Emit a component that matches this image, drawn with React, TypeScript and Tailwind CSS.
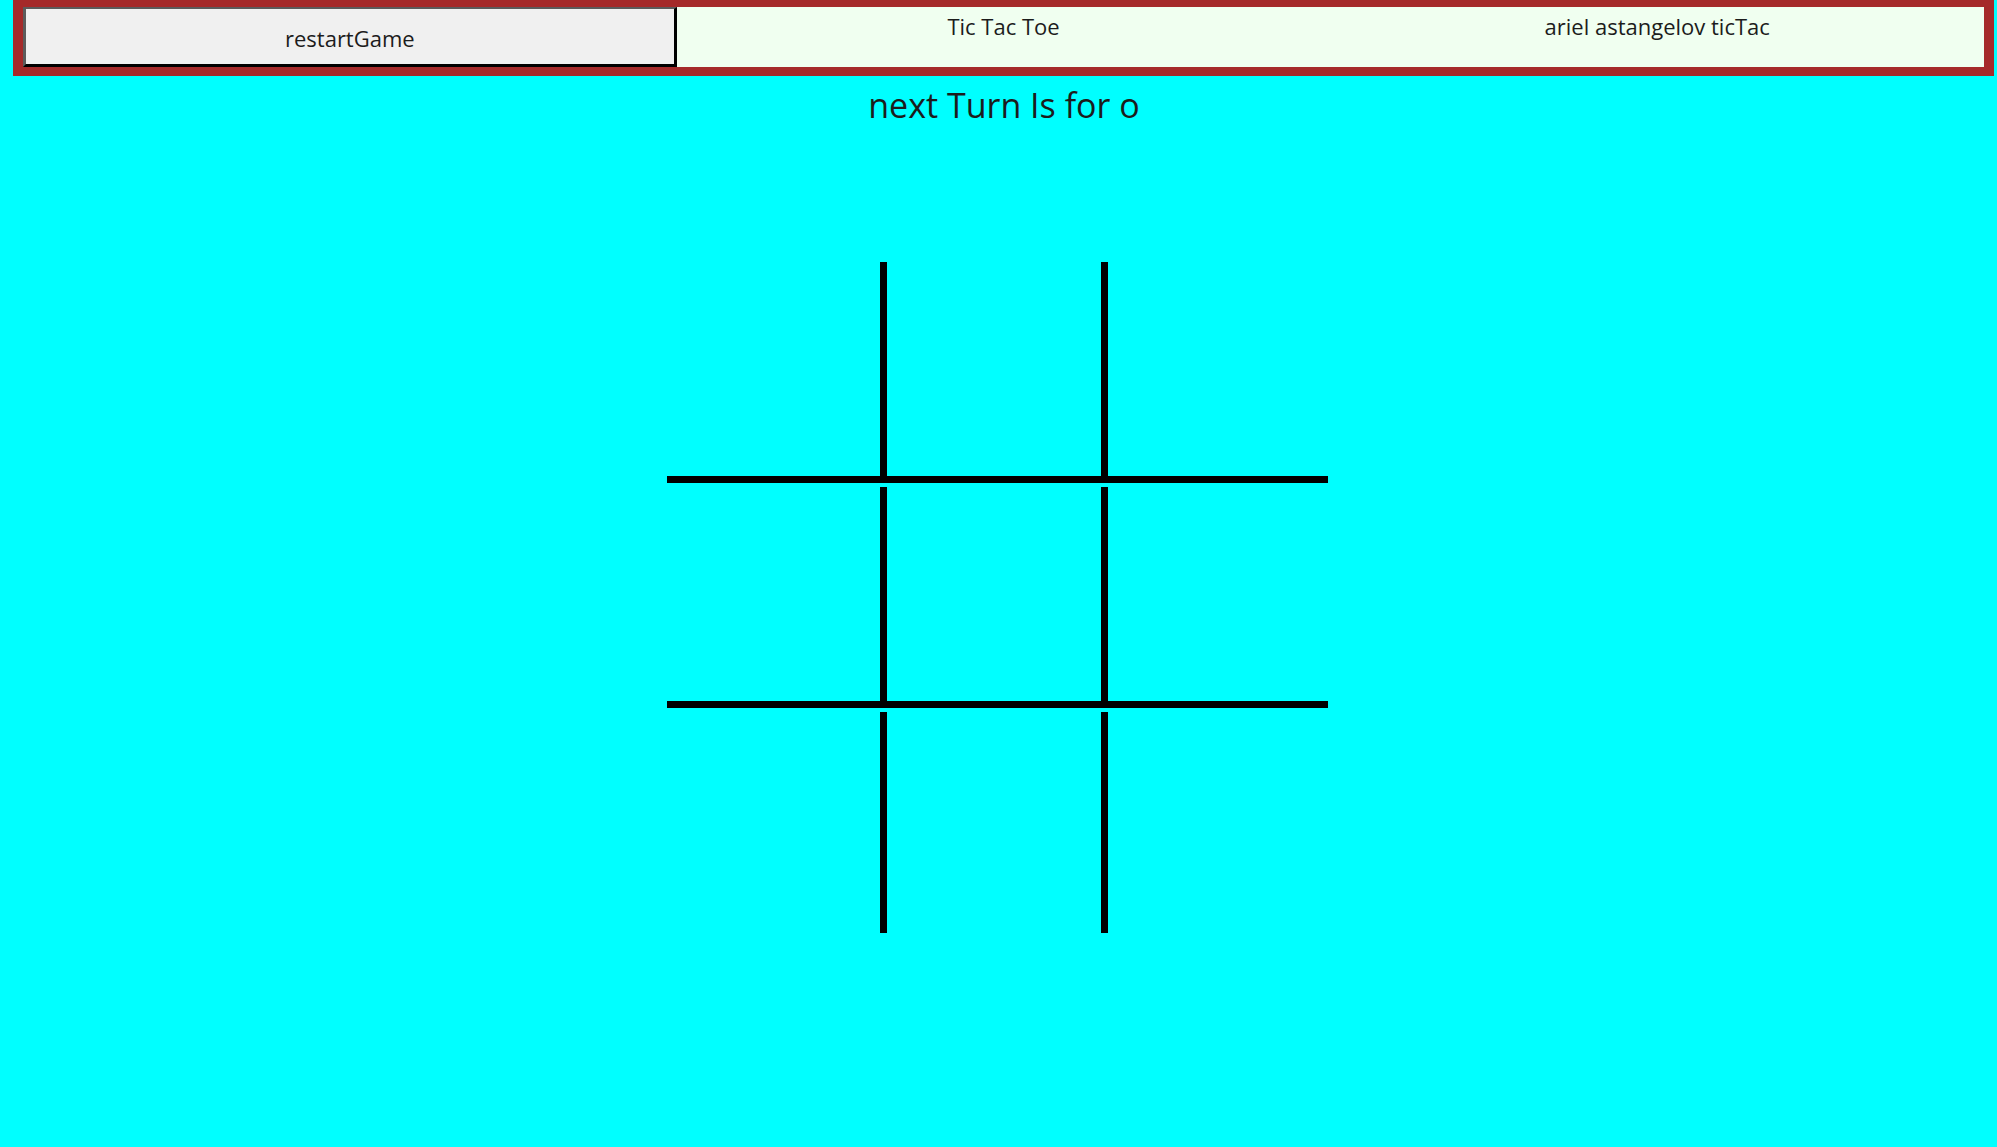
const cells = [0, 1, 2, 3, 4, 5, 6, 7, 8];

export default function App() {
    return (
        <div
            className="min-h-[1147px] w-full bg-[#00ffff] text-[#1c1c1c]"
            style={{ fontFamily: '"Open Sans", "Noto Sans", sans-serif' }}
        >
            <header className="ml-[13px] mr-[3px] grid grid-cols-3 border-x-[10px] border-t-[7px] border-b-[9px] border-[#a52a2a]">
                <button className="h-[60px] border-t-2 border-l-[3px] border-b-[3px] border-r-[3px] border-t-[#5c5c5c] border-l-[#5c5c5c] border-b-black border-r-black bg-[#f0f0f0] pt-[4px] text-[22px]">
                    restartGame
                </button>
                <div className="bg-[#f0fff0] pt-[4px] text-center text-[22px] leading-[30px]">
                    Tic Tac Toe
                </div>
                <div className="bg-[#f0fff0] pt-[4px] text-center text-[22px] leading-[30px]">
                    ariel astangelov ticTac
                </div>
            </header>

            <h1 className="mt-[7px] pl-[11px] text-center text-[34px] leading-[45px]">
                next Turn Is for o
            </h1>

            <div className="pr-[2px]">
                <div className="mx-auto mt-[134px] flex w-[661px] flex-col gap-[4px]">
                    {[0, 1, 2].map(function (row) {
                        return (
                            <div key={row} className="flex h-[221px]">
                                {cells
                                    .filter(function (c) {
                                        return Math.floor(c / 3) === row;
                                    })
                                    .map(function (c) {
                                        const col = c % 3;
                                        return (
                                            <div
                                                key={c}
                                                className={
                                                    (col === 0
                                                        ? "w-[213px]"
                                                        : col === 1
                                                          ? "w-[228px] border-x-[7px]"
                                                          : "w-[220px]") +
                                                    (row < 2 ? " border-b-[7px]" : "") +
                                                    " h-full border-black"
                                                }
                                            />
                                        );
                                    })}
                            </div>
                        );
                    })}
                </div>
            </div>
        </div>
    );
}
